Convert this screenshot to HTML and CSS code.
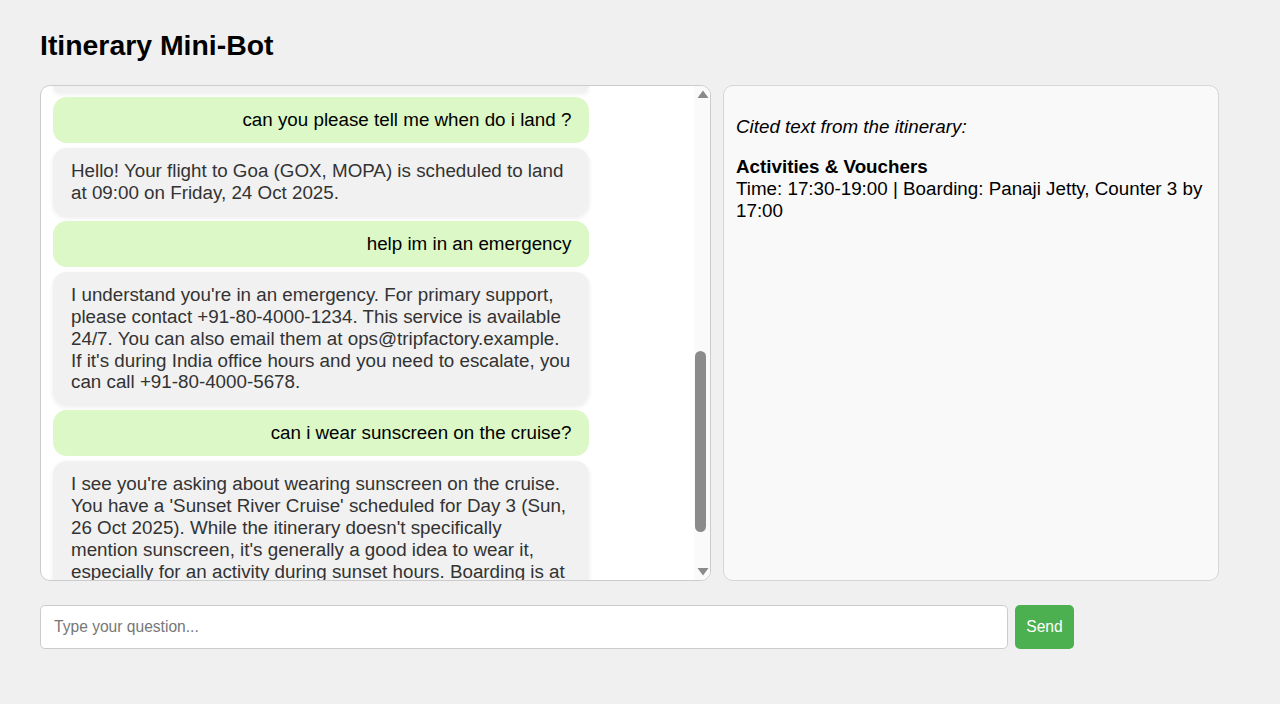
FILE: index.html
```html
<!DOCTYPE html>
<html lang="en">
<head>
<meta charset="utf-8">
<title>Itinerary Mini-Bot</title>
<link rel="stylesheet" href="styles.css">
</head>
<body>
  <h1 class="title">Itinerary Mini-Bot</h1>
  <div class="main">
    <div class="chat">
      <div class="log">
        <div class="msg-tail"></div>
        <div class="msg user">can you please tell me when do i land ?</div>
        <div class="msg bot">Hello! Your flight to Goa (GOX, MOPA) is scheduled to land at 09:00 on Friday, 24 Oct 2025.</div>
        <div class="msg user">help im in an emergency</div>
        <div class="msg bot">I understand you're in an emergency. For primary support, please contact +91-80-4000-1234. This service is available 24/7. You can also email them at ops@tripfactory.example. If it's during India office hours and you need to escalate, you can call +91-80-4000-5678.</div>
        <div class="msg user">can i wear sunscreen on the cruise?</div>
        <div class="msg bot">I see you're asking about wearing sunscreen on the cruise. You have a 'Sunset River Cruise' scheduled for Day 3 (Sun, 26 Oct 2025). While the itinerary doesn't specifically mention sunscreen, it's generally a good idea to wear it, especially for an activity during sunset hours. Boarding is at</div>
      </div>
      <div class="scrollbar" aria-hidden="true">
        <div class="sb-btn">
          <svg width="12" height="8" viewBox="0 0 12 8"><path d="M6 0.5L11.5 8H0.5z" fill="#8a8a8a"/></svg>
        </div>
        <div class="sb-track">
          <div class="sb-before"></div>
          <div class="sb-thumb"></div>
          <div class="sb-after"></div>
        </div>
        <div class="sb-btn">
          <svg width="12" height="8" viewBox="0 0 12 8"><path d="M0.5 0H11.5L6 7.5z" fill="#8a8a8a"/></svg>
        </div>
      </div>
    </div>
    <div class="cite">
      <p class="cite-label"><em>Cited text from the itinerary:</em></p>
      <p class="cite-body"><strong>Activities &amp; Vouchers</strong><br>Time: 17:30-19:00 | Boarding: Panaji Jetty, Counter 3 by 17:00</p>
    </div>
  </div>
  <div class="composer">
    <input class="question" type="text" placeholder="Type your question...">
    <button class="send" type="button">Send</button>
  </div>
</body>
</html>
```

FILE: styles.css
```css
* { box-sizing: border-box; }

body {
  margin: 0;
  padding: 0 40px;
  background: #f0f0f0;
  font-family: "Liberation Sans", Arial, sans-serif;
  color: #000;
}

.title {
  margin: 29px 0 24px;
  font-size: 28.4px;
  line-height: 32px;
  font-weight: bold;
}

.main {
  display: flex;
  gap: 12px;
  align-items: flex-start;
}

.chat {
  width: 671px;
  height: 496px;
  border: 1px solid #ccc;
  border-radius: 10px;
  background: #fff;
  overflow: hidden;
  display: flex;
}

.log {
  flex: 1;
  min-width: 0;
  overflow: hidden;
  padding: 0 10px 0 12px;
  display: flex;
  flex-direction: column;
  gap: 5.25px;
}

.msg-tail {
  flex: none;
  width: 85%;
  height: 6px;
  background: #f1f1f1;
  border-radius: 0 0 14px 14px;
  box-shadow: 0 2px 5px rgba(0, 0, 0, 0.08);
}

.msg {
  flex: none;
  width: 85%;
  padding: 12px 18px;
  border-radius: 14px;
  font-size: 18.8px;
  line-height: 21.8px;
}

.msg.user {
  background: #dcf8c6;
  color: #000;
  text-align: right;
}

.msg.bot {
  background: #f1f1f1;
  color: #333;
  box-shadow: 0 2px 5px rgba(0, 0, 0, 0.08);
}

.scrollbar {
  flex: none;
  width: 16px;
  background: #fafafa;
  display: flex;
  flex-direction: column;
}

.sb-btn {
  flex: none;
  height: 16px;
  display: flex;
  align-items: center;
  justify-content: center;
  padding-left: 1px;
}

.sb-btn svg { display: block; }

.sb-track {
  flex: 1;
  display: flex;
  flex-direction: column;
  padding: 0 4px 0 1px;
}

.sb-before { flex: 248; }
.sb-after { flex: 32; }
.sb-thumb {
  flex: 181;
  background: #8b8b8b;
  border-radius: 6px;
}

.cite {
  width: 496px;
  height: 496px;
  border: 1px solid #d6d6d6;
  border-radius: 10px;
  background: #f9f9f9;
  padding: 11.5px 12px;
  font-size: 18.8px;
  line-height: 22px;
}

.cite p { margin: 18px 0; }

.composer {
  display: flex;
  gap: 7px;
  margin-top: 24px;
  height: 44px;
}

.question {
  width: 968px;
  height: 44px;
  border: 1px solid #ccc;
  border-radius: 5px;
  background: #fff;
  padding: 0 13px;
  font-family: "Liberation Sans", Arial, sans-serif;
  font-size: 15.6px;
  color: #000;
}

.question::placeholder { color: #777; }

.send {
  width: 59px;
  height: 44px;
  border: none;
  border-radius: 5px;
  background: #4caf50;
  color: #fff;
  font-family: "Liberation Sans", Arial, sans-serif;
  font-size: 15.6px;
}
```
